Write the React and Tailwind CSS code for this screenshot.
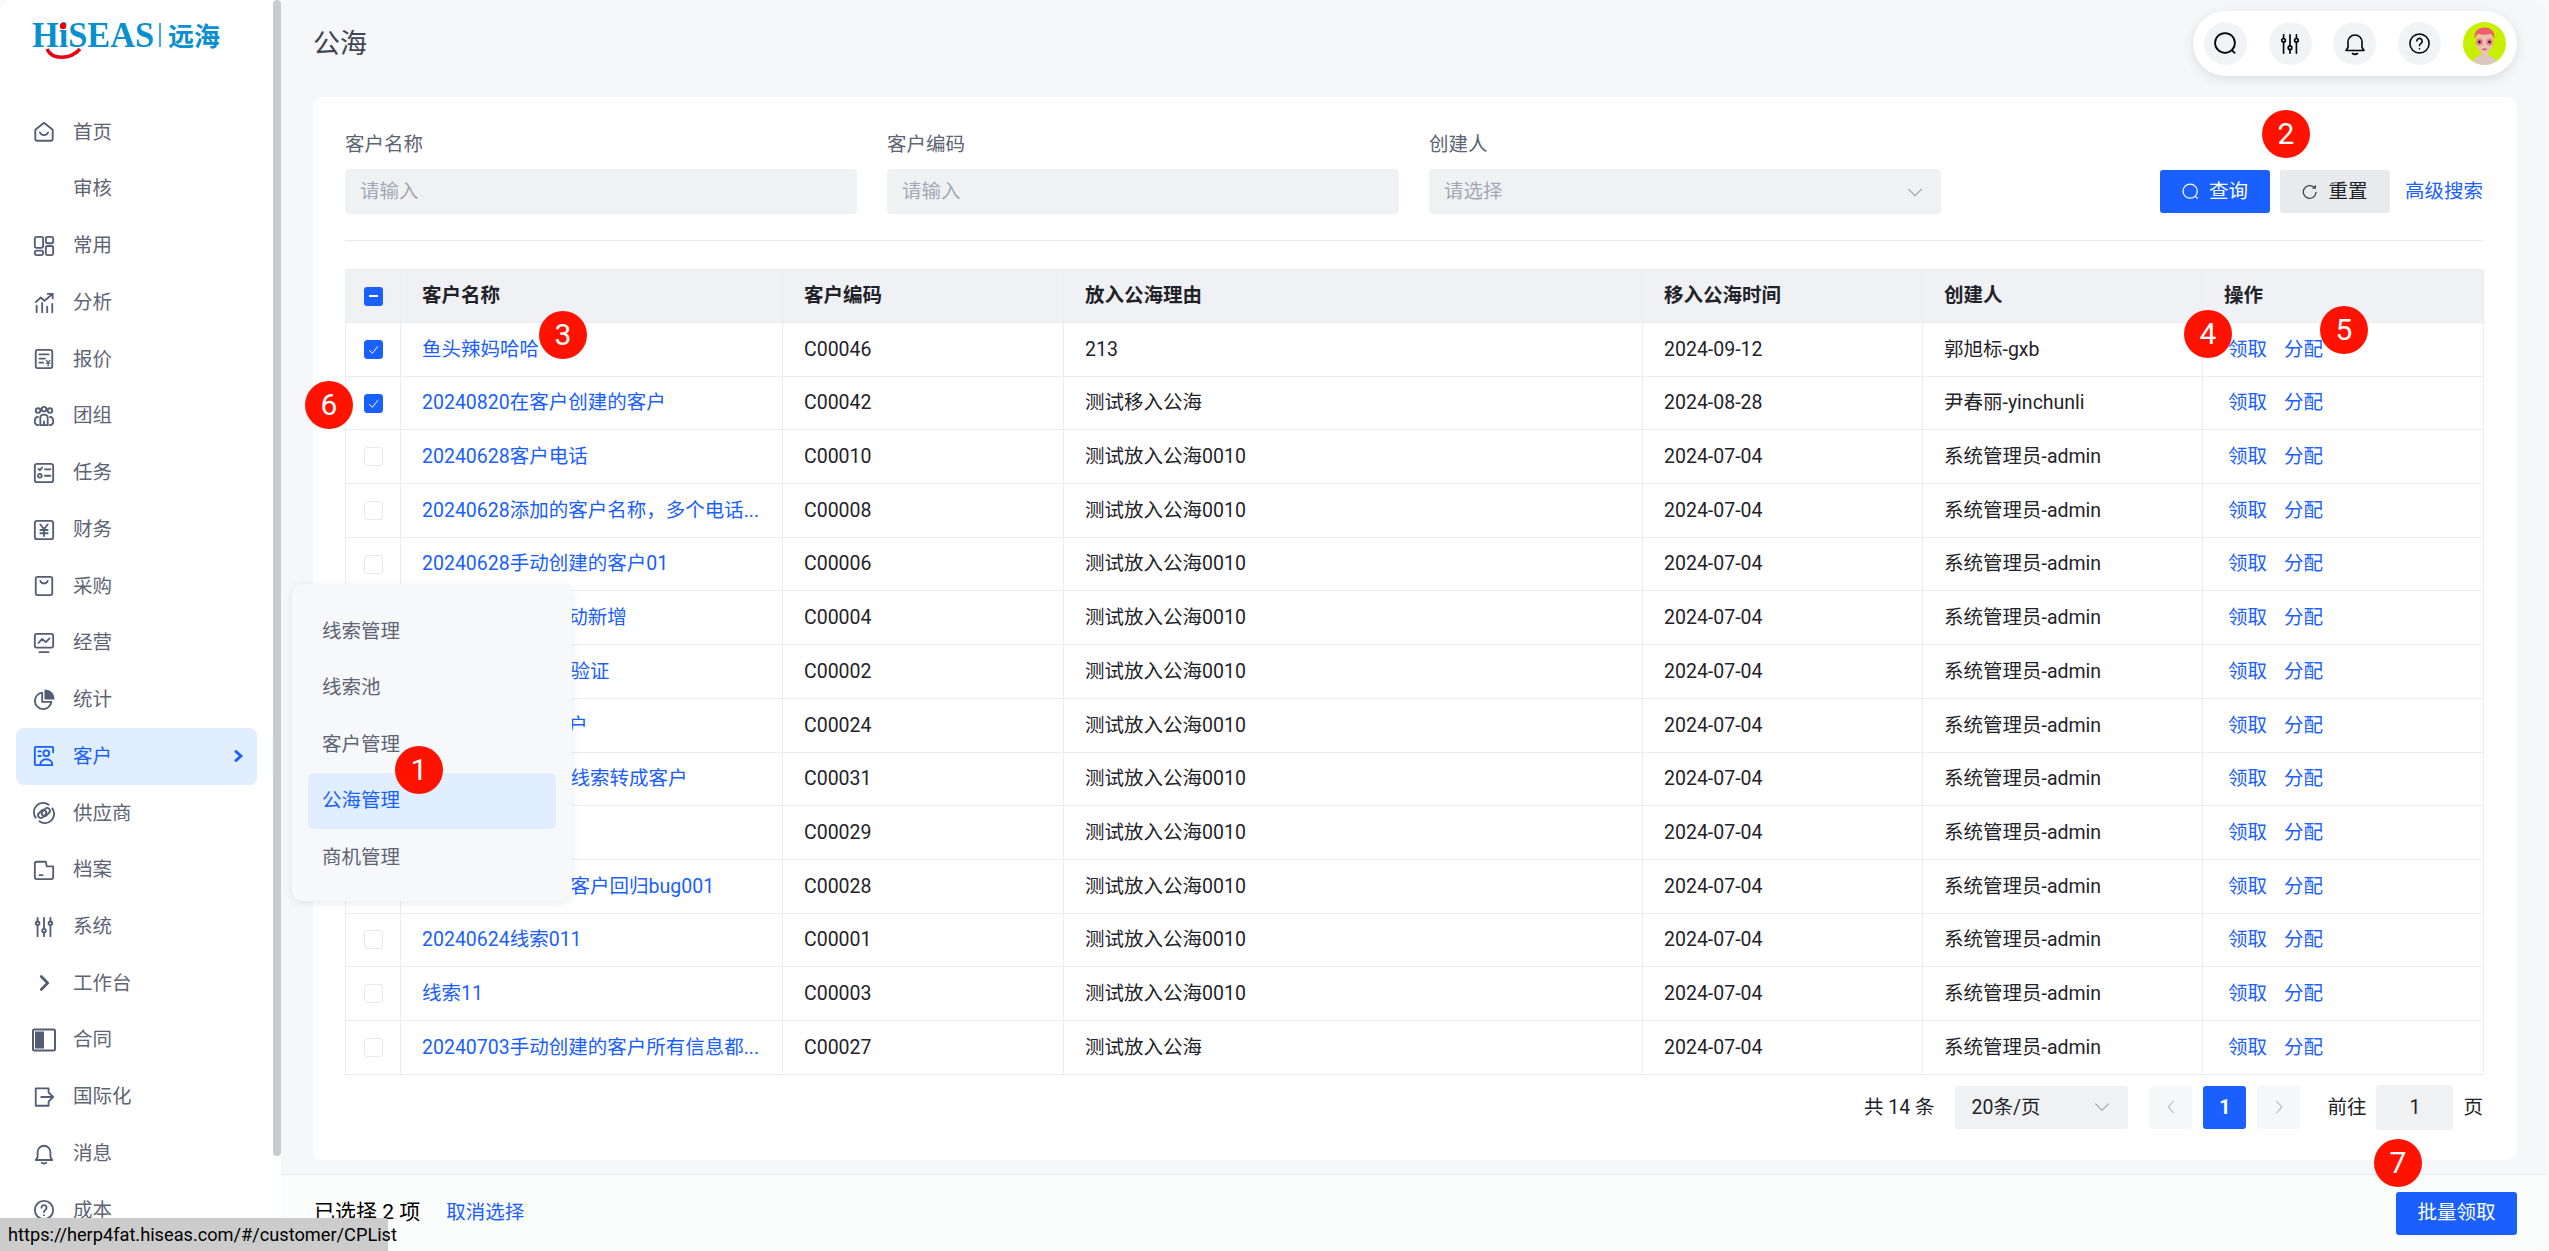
import React from "react";

const BLUE = "#1a60ff";

const Ico = ({ children, size = 22, className = "text-[#535d75]", sw = 2 }) => (
  <svg
    width={size}
    height={size}
    viewBox="0 0 24 24"
    fill="none"
    stroke="currentColor"
    strokeWidth={sw}
    strokeLinecap="round"
    strokeLinejoin="round"
    className={className}
  >
    {children}
  </svg>
);

const SlidersPaths = () => (
  <>
    <path d="M5 2v4M5 10v12M12 2v12M12 18v4M19 2v4M19 10v12" />
    <circle cx="5" cy="8" r="2" />
    <circle cx="12" cy="16" r="2" />
    <circle cx="19" cy="8" r="2" />
  </>
);
const BellPaths = () => (
  <>
    <path d="M3 18.5h18l-2-3V10a7 7 0 0 0-14 0v5.5z" />
    <path d="M9.5 21.5c1.5 1 3.5 1 5 0" />
  </>
);
const HelpPaths = () => (
  <>
    <circle cx="12" cy="12" r="10" />
    <path d="M9.2 9.5a2.8 2.8 0 1 1 4.4 2.3c-1 .7-1.6 1.2-1.6 2.4" />
    <path d="M12 17.5v.1" />
  </>
);

const menu = [
  { label: "首页", icon: (
    <>
      <path d="M12 2l9.5 7.5V20a1.5 1.5 0 0 1-1.5 1.5H4A1.5 1.5 0 0 1 2.5 20V9.5z" />
      <path d="M7.5 12.5c2 4 7 4 9 0" />
    </>
  ) },
  { label: "审核" },
  { label: "常用", icon: (
    <>
      <rect x="2" y="2" width="9" height="12" rx="2" />
      <rect x="14" y="2" width="8" height="7" rx="2" />
      <rect x="2" y="17" width="9" height="5" rx="2" />
      <rect x="14" y="12" width="8" height="10" rx="2" />
    </>
  ) },
  { label: "分析", icon: (
    <>
      <path d="M3 11l5.5-5 4 3.5L21 2.5M16 2h5.5v5" />
      <path d="M4 15v7M10 12v10M15.5 16v6M21 13v9" />
    </>
  ) },
  { label: "报价", icon: (
    <>
      <rect x="3" y="2" width="18" height="20" rx="2" />
      <path d="M7 7h10M7 11.5h6M7 16h4" />
      <path d="M14.5 13.5l2 2 2-2M16.5 15.5v4M14.5 16.5h4" strokeWidth="1.4" />
    </>
  ) },
  { label: "团组", icon: (
    <>
      <circle cx="5.5" cy="6" r="2.5" />
      <circle cx="12" cy="4.5" r="2.5" />
      <circle cx="18.5" cy="6" r="2.5" />
      <path d="M6 22c-3 0-4.5-2-4-5 .3-2.5 1.5-4 3.5-4" />
      <path d="M18 22c3 0 4.5-2 4-5-.3-2.5-1.5-4-3.5-4" />
      <path d="M8 22v-8c0-2 1.5-3.5 4-3.5s4 1.5 4 3.5v8z" />
      <path d="M12 18v4" />
    </>
  ) },
  { label: "任务", icon: (
    <>
      <rect x="2" y="2" width="20" height="20" rx="2.5" />
      <path d="M6 7.5l1.5 1.5L10 6" />
      <circle cx="7.5" cy="15" r="2" />
      <path d="M13 8h6M13 15h6" />
    </>
  ) },
  { label: "财务", icon: (
    <>
      <rect x="2" y="2" width="20" height="20" rx="2.5" />
      <path d="M8 6l4 5 4-5M12 11v7.5M8 12h8M8 15.5h8" />
    </>
  ) },
  { label: "采购", icon: (
    <>
      <rect x="3" y="2" width="18" height="20" rx="2" />
      <path d="M8 6.5c1 3.5 7 3.5 8 0" />
    </>
  ) },
  { label: "经营", icon: (
    <>
      <rect x="2" y="2" width="20" height="15" rx="2" />
      <path d="M6 12l4-4.5 4 3.5 4-4" />
      <path d="M7 22h10" />
    </>
  ) },
  { label: "统计", icon: (
    <>
      <path d="M10 4a9 9 0 1 0 10 10H10z" />
      <path d="M13.5 1.5a9 9 0 0 1 9 9h-9z" fill="currentColor" />
    </>
  ) },
  { label: "客户", active: true, icon: (
    <>
      <path d="M22 8V3a1 1 0 0 0-1-1H3a1 1 0 0 0-1 1v18a1 1 0 0 0 1 1h18" />
      <circle cx="14.5" cy="9" r="3.2" />
      <path d="M8 21.5c0-4 3-6 6.5-6s6.5 2 6.5 6" />
      <path d="M6 7h2.5M6 12h2.5" />
    </>
  ) },
  { label: "供应商", icon: (
    <>
      <path d="M3 17A10 10 0 0 1 17 3" />
      <path d="M21 7A10 10 0 0 1 7 21" />
      <rect x="5" y="10" width="10" height="6" rx="3" transform="rotate(-45 10 13)" />
      <rect x="9" y="8" width="10" height="6" rx="3" transform="rotate(-45 14 11)" />
    </>
  ) },
  { label: "档案", icon: (
    <>
      <path d="M2 5a2 2 0 0 1 2-2h10l1 5h7v12a2 2 0 0 1-2 2H4a2 2 0 0 1-2-2z" />
      <path d="M7 17.5h3.5" />
    </>
  ) },
  { label: "系统", icon: <SlidersPaths /> },
  { label: "工作台", icon: <path d="M9 5l7 7-7 7" strokeWidth="3" /> },
  { label: "合同", icon: (
    <>
      <rect x="1" y="1.5" width="22" height="21" rx="1.5" />
      <rect x="3" y="3.5" width="9" height="17" fill="currentColor" stroke="none" />
    </>
  ), big: true },
  { label: "国际化", icon: (
    <>
      <path d="M17 7V2.5H3v19h14V17" />
      <path d="M9 12h13M17.5 7.5L22 12l-4.5 4.5" />
    </>
  ) },
  { label: "消息", icon: <BellPaths /> },
  { label: "成本", icon: <HelpPaths /> },
];

const subMenu = ["线索管理", "线索池", "客户管理", "公海管理", "商机管理"];

const A = "系统管理员-admin";
const R = "测试放入公海0010";
const T = "2024-07-04";
const rows = [
  ["鱼头辣妈哈哈", "C00046", "213", "2024-09-12", "郭旭标-gxb", true],
  ["20240820在客户创建的客户", "C00042", "测试移入公海", "2024-08-28", "尹春丽-yinchunli", true],
  ["20240628客户电话", "C00010", R, T, A],
  ["20240628添加的客户名称，多个电话...", "C00008", R, T, A],
  ["20240628手动创建的客户01", "C00006", R, T, A],
  ["20240628线索手动新增", "C00004", R, T, A],
  ["20240627线索01验证", "C00002", R, T, A],
  ["20240628手动客户", "C00024", R, T, A],
  ["20240625测试01线索转成客户", "C00031", R, T, A],
  ["20240628线索", "C00029", R, T, A],
  ["20240628测试01客户回归bug001", "C00028", R, T, A],
  ["20240624线索011", "C00001", R, T, A],
  ["线索11", "C00003", R, T, A],
  ["20240703手动创建的客户所有信息都...", "C00027", "测试放入公海", T, A],
];

const headers = ["客户名称", "客户编码", "放入公海理由", "移入公海时间", "创建人", "操作"];

const Badge = ({ n, className }) => (
  <div className={`absolute z-30 flex h-12 w-12 items-center justify-center rounded-full bg-[#ff1300] text-[30px] leading-none text-white ${className}`}>
    {n}
  </div>
);

const Logo = () => (
  <svg width="200" height="56" viewBox="0 0 200 56">
    <text x="0" y="35" fontFamily="'Liberation Serif', serif" fontWeight="700" fontSize="36" textLength="122" lengthAdjust="spacingAndGlyphs" fill="#0a8fd0">
      HiSEAS
    </text>
    <circle cx="31" cy="14" r="3.2" fill="#e60012" />
    <path d="M15 37c5 11 23 11 33 0" fill="none" stroke="#e60012" strokeWidth="3.5" />
    <path d="M128 11v24" stroke="#0a8fd0" strokeWidth="1.5" />
    <text x="136" y="34" fontFamily="'Noto Sans CJK SC', sans-serif" fontWeight="700" fontSize="26" fill="#0a8fd0">
      远海
    </text>
  </svg>
);

const Avatar = () => (
  <svg width="43" height="43" viewBox="0 0 43 43" className="rounded-full">
    <rect width="43" height="43" fill="#c8ee00" />
    <path d="M9 43c1-8 7-10 12.5-10S33 35 34 43z" fill="#dcc7c2" />
    <rect x="18" y="26" width="7" height="9" fill="#e6c4ba" />
    <ellipse cx="21.5" cy="20" rx="8.5" ry="10.5" fill="#ecc0b4" />
    <path d="M12 17c-2-9 5-11.5 9.5-11.500S33 8 31 17c-1-4-3-5-4-5-3 1-9 1-11 0-1.500 0-3 1-4 5z" fill="#ef5f6d" />
    <circle cx="16.5" cy="20" r="3.5" fill="#e9838a" />
    <circle cx="26.5" cy="20" r="3.5" fill="#e9838a" />
    <circle cx="16.5" cy="20" r="1.4" fill="#3a2326" />
    <circle cx="26.5" cy="20" r="1.4" fill="#3a2326" />
    <path d="M19.5 27c1.5 .8 2.5 .8 4 0" stroke="#c9545f" strokeWidth="1.5" fill="none" />
  </svg>
);

const Checkbox = ({ checked }) => (
  <span className={`mx-auto flex h-[19px] w-[19px] items-center justify-center rounded-[3px] border ${checked ? "border-[#1a60ff] bg-[#1a60ff]" : "border-[#e6e8ed] bg-white"}`}>
    {checked && (
      <svg width="13" height="13" viewBox="0 0 24 24" fill="none" stroke="white" strokeWidth="1.8">
        <path d="M4 13l6 6L20 6" />
      </svg>
    )}
  </span>
);

const Field = ({ label, placeholder, select }) => (
  <div className="w-[512px]">
    <div className="mb-[12px] leading-[24px] text-[#5d6474]">{label}</div>
    <div className="flex h-[45px] items-center justify-between rounded-[4px] bg-[#f0f1f3] pl-[15px] pr-[17px] text-[#a3a8b3]">
      {placeholder}
      {select && (
        <svg width="18" height="18" viewBox="0 0 24 24" fill="none" stroke="#a3a8b3" strokeWidth="1.6">
          <path d="M3 8l9 9 9-9" />
        </svg>
      )}
    </div>
  </div>
);

export default function App() {
  return (
    <div className="relative flex h-screen w-full overflow-hidden bg-[#fafafa] text-[19.5px] text-[#1f2329] [font-family:Roboto,'Noto_Sans_CJK_SC',sans-serif]">
      {/* sidebar */}
      <aside className="relative w-[281px] shrink-0 overflow-hidden rounded-tl-[14px] bg-white">
        <div className="h-[104px] pl-[32px] pt-[12px]">
          <Logo />
        </div>
        <nav>
          {menu.map((m) => (
            <div
              key={m.label}
              className={`mx-[16px] flex h-[56.74px] w-[241px] items-center rounded-[8px] pl-[16px] pr-[12px] ${m.active ? "bg-[#e1eeff] text-[#1a60ff]" : "text-[#5d6474]"}`}
            >
              <span className="flex w-[24px] shrink-0 items-center justify-center">
                {m.icon && (
                  <Ico size={m.big ? 28 : 22} className={m.active ? "text-[#1a60ff]" : "text-[#535d75]"}>
                    {m.icon}
                  </Ico>
                )}
              </span>
              <span className="ml-[17px] flex-1">{m.label}</span>
              {m.active && (
                <svg width="14" height="16" viewBox="0 0 24 24" fill="none" stroke={BLUE} strokeWidth="5">
                  <path d="M7 3l10 9-10 9" />
                </svg>
              )}
            </div>
          ))}
        </nav>
        <div className="absolute left-[273px] top-0 h-[1156px] w-[8px] rounded-full bg-[#c8cbd2]" />
      </aside>

      {/* main */}
      <main className="mr-[3px] flex min-w-0 flex-1 flex-col rounded-r-[14px] bg-[#f6f7f9]">
        <header className="flex h-[97px] shrink-0 items-start justify-between pl-[32px] pr-[29px] pt-[11px]">
          <h1 className="mt-[15px] text-[27px] leading-[36px] text-[#3d4452]">公海</h1>
          <div className="flex h-[65px] w-[324px] items-center gap-[21.7px] rounded-full bg-white pl-[11px] shadow-[0_3px_12px_rgba(40,50,70,0.13)]">
            <span className="flex h-[43px] w-[43px] items-center justify-center rounded-full bg-[#f2f3f5]">
              <Ico size={25} className="text-black" sw={1.7}>
                <circle cx="11.5" cy="11.5" r="9.5" />
                <path d="M18.8 19l2 2" />
              </Ico>
            </span>
            <span className="flex h-[43px] w-[43px] items-center justify-center rounded-full bg-[#f2f3f5]">
              <Ico size={22} className="text-black" sw={1.8}><SlidersPaths /></Ico>
            </span>
            <span className="flex h-[43px] w-[43px] items-center justify-center rounded-full bg-[#f2f3f5]">
              <Ico size={24} className="text-black" sw={1.6}><BellPaths /></Ico>
            </span>
            <span className="flex h-[43px] w-[43px] items-center justify-center rounded-full bg-[#f2f3f5]">
              <Ico size={23} className="text-black" sw={1.6}><HelpPaths /></Ico>
            </span>
            <Avatar />
          </div>
        </header>

        <section className="ml-[32px] mr-[29px] h-[1063px] shrink-0 rounded-[10px] bg-white pl-[32px] pr-[34px] pt-[36px]">
          <div className="flex items-end justify-between border-b border-[#e9ebf0] pb-[26px]">
            <div className="flex gap-[30px]">
              <Field label="客户名称" placeholder="请输入" />
              <Field label="客户编码" placeholder="请输入" />
              <Field label="创建人" placeholder="请选择" select />
            </div>
            <div className="mb-[1px] flex items-center">
              <button className="flex h-[43px] w-[110px] items-center justify-center gap-[10px] rounded-[3px] bg-[#1a60ff] text-white">
                <svg width="17" height="17" viewBox="0 0 24 24" fill="none" stroke="white" strokeWidth="1.8">
                  <circle cx="11.5" cy="11.5" r="10" />
                  <path d="M19 19l3 3" />
                </svg>
                查询
              </button>
              <button className="ml-[10px] flex h-[43px] w-[110px] items-center justify-center gap-[10px] rounded-[3px] bg-[#e9eaee]">
                <svg width="16" height="16" viewBox="0 0 24 24" fill="none" stroke="#444" strokeWidth="2">
                  <path d="M21 12a9.5 9.5 0 1 1-3-7" />
                  <path d="M21 1v6h-6" fill="#444" stroke="none" />
                </svg>
                重置
              </button>
              <a className="ml-[15px] text-[#1a60ff]">高级搜索</a>
            </div>
          </div>

          <table className="mt-[28px] w-[2138px] table-fixed border-collapse">
            <colgroup>
              <col className="w-[55px]" />
              <col className="w-[382px]" />
              <col className="w-[281px]" />
              <col className="w-[579px]" />
              <col className="w-[280px]" />
              <col className="w-[280px]" />
              <col className="w-[281px]" />
            </colgroup>
            <thead>
              <tr className="h-[53px] bg-[#f0f1f4]">
                <th className="border border-[#ebedf2]">
                  <span className="mx-auto flex h-[19px] w-[19px] items-center justify-center rounded-[3px] bg-[#1a60ff]">
                    <span className="h-[2px] w-[9px] bg-white" />
                  </span>
                </th>
                {headers.map((h) => (
                  <th key={h} className="border border-[#ebedf2] pl-[21px] text-left font-bold">
                    {h}
                  </th>
                ))}
              </tr>
            </thead>
            <tbody>
              {rows.map((r) => (
                <tr key={r[1]} className="h-[53.7px]">
                  <td className="border border-[#ebedf2]">
                    <Checkbox checked={r[5]} />
                  </td>
                  <td className="overflow-hidden whitespace-nowrap border border-[#ebedf2] pl-[21px] text-[#1a60ff]">{r[0]}</td>
                  <td className="border border-[#ebedf2] pl-[21px]">{r[1]}</td>
                  <td className="border border-[#ebedf2] pl-[21px]">{r[2]}</td>
                  <td className="border border-[#ebedf2] pl-[21px]">{r[3]}</td>
                  <td className="border border-[#ebedf2] pl-[21px]">{r[4]}</td>
                  <td className="border border-[#ebedf2] pl-[25px] text-[#1a60ff]">
                    <span className="mr-[17px]">领取</span>
                    <span>分配</span>
                  </td>
                </tr>
              ))}
            </tbody>
          </table>

          <div className="mt-[10px] flex h-[45px] items-center justify-end">
            <span>共 14 条</span>
            <div className="ml-[21px] flex h-[43px] w-[173px] items-center justify-between rounded-[3px] bg-[#f0f1f3] pl-[16px] pr-[18px]">
              20条/页
              <svg width="16" height="16" viewBox="0 0 24 24" fill="none" stroke="#9aa0ab" strokeWidth="1.6">
                <path d="M2 7l10 10L22 7" />
              </svg>
            </div>
            <span className="ml-[21px] flex h-[43px] w-[43px] items-center justify-center rounded-[3px] bg-[#f6f7f9]">
              <svg width="16" height="16" viewBox="0 0 24 24" fill="none" stroke="#aab0ba" strokeWidth="1.6">
                <path d="M16 3l-8 9 8 9" />
              </svg>
            </span>
            <span className="ml-[11px] flex h-[43px] w-[43px] items-center justify-center rounded-[3px] bg-[#1a60ff] font-bold text-white">1</span>
            <span className="ml-[11px] flex h-[43px] w-[43px] items-center justify-center rounded-[3px] bg-[#f6f7f9]">
              <svg width="16" height="16" viewBox="0 0 24 24" fill="none" stroke="#aab0ba" strokeWidth="1.6">
                <path d="M8 3l8 9-8 9" />
              </svg>
            </span>
            <span className="ml-[27px]">前往</span>
            <span className="ml-[10px] flex h-[45px] w-[77px] items-center justify-center rounded-[3px] bg-[#f0f1f3]">1</span>
            <span className="ml-[10px]">页</span>
          </div>
        </section>

        <footer className="mt-[14px] flex h-[77px] flex-1 items-center justify-between rounded-br-[14px] border-t border-[#e9ebf0] bg-[#fbfcfc] pl-[33px] pr-[29px]">
          <div className="flex items-center">
            <span className="text-[21px] text-black">已选择 2 项</span>
            <a className="ml-[26px] text-[#1a60ff]">取消选择</a>
          </div>
          <button className="h-[43px] w-[121px] rounded-[3px] bg-[#1a60ff] text-white">批量领取</button>
        </footer>
      </main>

      {/* customer submenu */}
      <div className="absolute left-[292px] top-[584px] z-20 h-[317px] w-[280px] rounded-[10px] bg-[#f7f8fa] px-[16px] pt-[19px] shadow-[0_2px_8px_rgba(40,50,70,0.1)]">
        {subMenu.map((s) => (
          <div
            key={s}
            className={`flex h-[56.6px] items-center rounded-[6px] pl-[14px] ${s === "公海管理" ? "bg-[#e1eeff] text-[#1a60ff]" : "text-[#5d6474]"}`}
          >
            {s}
          </div>
        ))}
      </div>

      <Badge n="1" className="left-[395px] top-[746px]" />
      <Badge n="2" className="left-[2262px] top-[110px]" />
      <Badge n="3" className="left-[539px] top-[311px]" />
      <Badge n="4" className="left-[2184px] top-[310px]" />
      <Badge n="5" className="left-[2320px] top-[306px]" />
      <Badge n="6" className="left-[305px] top-[381px]" />
      <Badge n="7" className="left-[2374px] top-[1139px]" />

      {/* browser status bubble */}
      <div className="absolute bottom-0 left-0 z-40 flex h-[33px] w-[388px] items-center rounded-tr-[3px] bg-[#cccccc] pl-[8px] text-[18.2px] text-black">
        https://herp4fat.hiseas.com/#/customer/CPList
      </div>
    </div>
  );
}
